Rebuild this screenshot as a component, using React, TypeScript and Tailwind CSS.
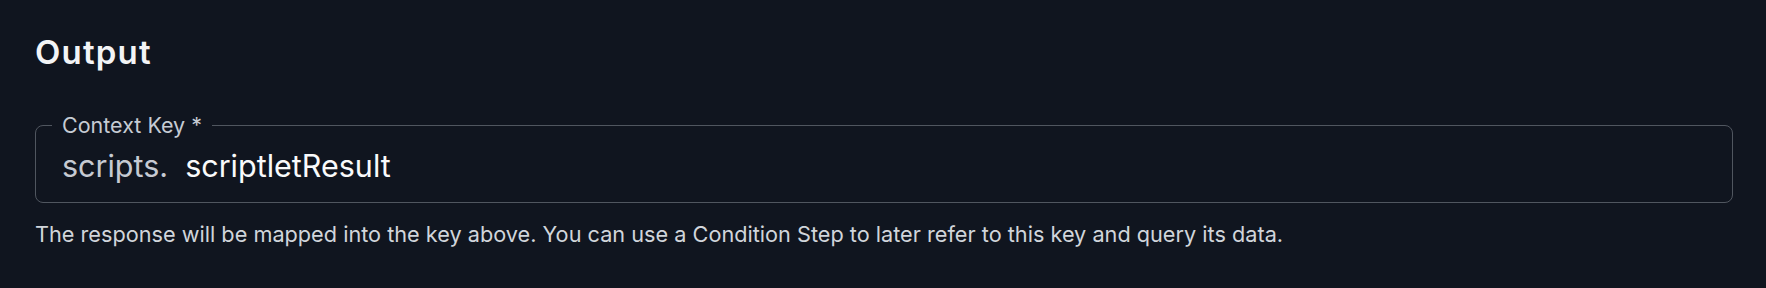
export default function App() {
  return (
    <div className="min-h-screen w-full bg-[#10151f] pl-[35px] pr-[33px] pt-[32px] font-['Inter',sans-serif]">
      <h2 className="text-[33px] font-semibold leading-[40px] tracking-[1.2px] text-[#f3f4f6]">Output</h2>

      <fieldset className="mt-[41px] rounded-lg border border-[#50565f] pl-[16px] pr-4 pb-[18px]">
        <legend className="px-[10px] text-[21.5px] leading-[24px] text-[#c6cbd3]">Context Key *</legend>
        <div className="mt-[11px] flex items-center pl-[10px] text-[30.5px] leading-[36px]">
          <span className="text-[#c6cad2]">scripts.</span>
          <span className="ml-[17px] text-[#f9fafb]">scriptletResult</span>
        </div>
      </fieldset>

      <p className="mt-[17px] text-[21.7px] leading-[28px] text-[#d1d5db]">
        The response will be mapped into the key above. You can use a Condition Step to later refer to this key and query its data.
      </p>
    </div>
  );
}
